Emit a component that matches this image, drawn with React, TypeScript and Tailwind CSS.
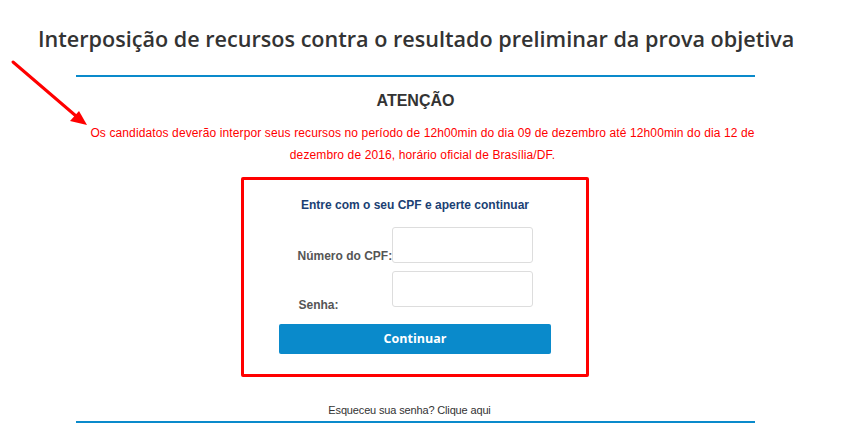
import React from "react";

export default function App() {
  return (
    <div className="relative w-[861px] h-[427px] bg-white overflow-hidden">
      <svg className="absolute left-0 top-0" width="100" height="140" viewBox="0 0 100 140">
        <line x1="13" y1="62" x2="76" y2="116" stroke="#ff0000" strokeWidth="3" strokeLinecap="round" />
        <polygon points="87,125 70,121 79,111" fill="#ff0000" />
      </svg>
      <h1
        className="pl-[38px] pt-[24px] text-[21.6px] leading-[30px] font-semibold text-[#333333]"
        style={{ fontFamily: '"Open Sans", sans-serif' }}
      >
        Interposição de recursos contra o resultado preliminar da prova objetiva
      </h1>
      <div className="ml-[76px] w-[679px] mt-[21px] border-t-2 border-[#0a8acb]">
        <div style={{ fontFamily: '"Liberation Sans", Arial, sans-serif' }} className="flex flex-col items-center">
          <div className="mt-[14px] text-[16px] leading-[20px] font-bold text-[#333333]">ATENÇÃO</div>
          <p className="mt-[11px] w-[693px] shrink-0 pl-[14px] text-[12px] leading-[22px] text-[#ff0000] text-center tracking-[0.12px]">
            Os candidatos deverão interpor seus recursos no período de 12h00min do dia 09 de dezembro até 12h00min do dia 12 de dezembro de 2016, horário oficial de Brasília/DF.
          </p>
          <div className="mt-[11px] -ml-[1px] w-[348px] h-[200px] border-[3px] border-[#ff0000] rounded-[2px] flex flex-col items-center">
            <div className="mt-[17px] text-[12px] leading-[16px] font-bold text-[#1b3f73]">
              Entre com o seu CPF e aperte continuar
            </div>
            <div className="mt-[14px] flex flex-col gap-[8px]">
              <div className="flex items-end">
                <span className="w-[94px] whitespace-nowrap text-[12px] leading-[14px] font-bold text-[#555555]">Número do CPF:</span>
                <input className="w-[141px] h-[36px] border border-[#dddddd] rounded-[3px] bg-white" />
              </div>
              <div className="flex items-end">
                <span className="w-[94px] whitespace-nowrap text-[12px] leading-[14px] font-bold text-[#555555] pl-[1px] -mb-[5px]">Senha:</span>
                <input className="w-[141px] h-[36px] border border-[#dddddd] rounded-[3px] bg-white" />
              </div>
            </div>
            <button
              className="mt-[17px] w-[272px] h-[30px] bg-[#0a8acb] rounded-[2px] text-white text-[12.5px] font-bold"
              style={{ fontFamily: '"Open Sans", sans-serif' }}
            >
              Continuar
            </button>
          </div>
          <div className="mt-[26px] pr-[12px] text-[11px] leading-[14px] text-[#333333] tracking-[-0.15px]">
            Esqueceu sua senha? Clique aqui
          </div>
          <div className="mt-[4px] w-full border-t-2 border-[#0a8acb]" />
        </div>
      </div>
    </div>
  );
}
